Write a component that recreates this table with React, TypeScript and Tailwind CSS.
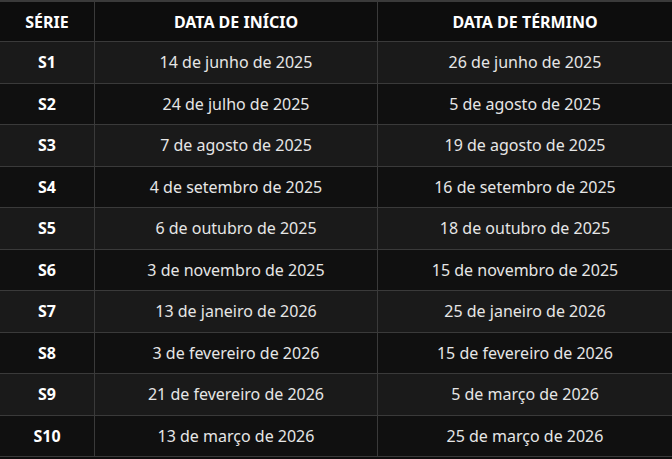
const rows = [
  ["S1", "14 de junho de 2025", "26 de junho de 2025"],
  ["S2", "24 de julho de 2025", "5 de agosto de 2025"],
  ["S3", "7 de agosto de 2025", "19 de agosto de 2025"],
  ["S4", "4 de setembro de 2025", "16 de setembro de 2025"],
  ["S5", "6 de outubro de 2025", "18 de outubro de 2025"],
  ["S6", "3 de novembro de 2025", "15 de novembro de 2025"],
  ["S7", "13 de janeiro de 2026", "25 de janeiro de 2026"],
  ["S8", "3 de fevereiro de 2026", "15 de fevereiro de 2026"],
  ["S9", "21 de fevereiro de 2026", "5 de março de 2026"],
  ["S10", "13 de março de 2026", "25 de março de 2026"],
];

export default function App() {
  return (
    <div className="w-[672px] h-[459px] bg-[#0e0e0e] font-['Noto_Sans',sans-serif] overflow-hidden">
      <div className="border-t-2 border-[#3a3a3a]">
        {/* Header */}
        <div className="grid grid-cols-[94px_1px_282px_1px_1fr] h-[40px] bg-[#0d0d0d] border-b border-[#3a3a3a]">
          <div className="flex items-center justify-center text-[16px] font-bold text-white">SÉRIE</div>
          <div className="bg-[#3a3a3a]" />
          <div className="flex items-center justify-center text-[16px] font-bold text-white">DATA DE INÍCIO</div>
          <div className="bg-[#3a3a3a]" />
          <div className="flex items-center justify-center text-[16px] font-bold text-white">DATA DE TÉRMINO</div>
        </div>
        {rows.map(([s, start, end], i) => (
          <div
            key={s}
            className={`grid grid-cols-[94px_1px_282px_1px_1fr] border-b border-[#3a3a3a] h-[41.5px] ${
              i % 2 === 0 ? "bg-[#1a1a1a]" : "bg-[#101010]"
            }`}
          >
            <div className="flex items-center justify-center text-[16px] font-bold text-white">{s}</div>
            <div className="bg-[#3a3a3a]" />
            <div className="flex items-center justify-center text-[16px] text-[#e6e6e6]">{start}</div>
            <div className="bg-[#3a3a3a]" />
            <div className="flex items-center justify-center text-[16px] text-[#e6e6e6]">{end}</div>
          </div>
        ))}
      </div>
    </div>
  );
}
